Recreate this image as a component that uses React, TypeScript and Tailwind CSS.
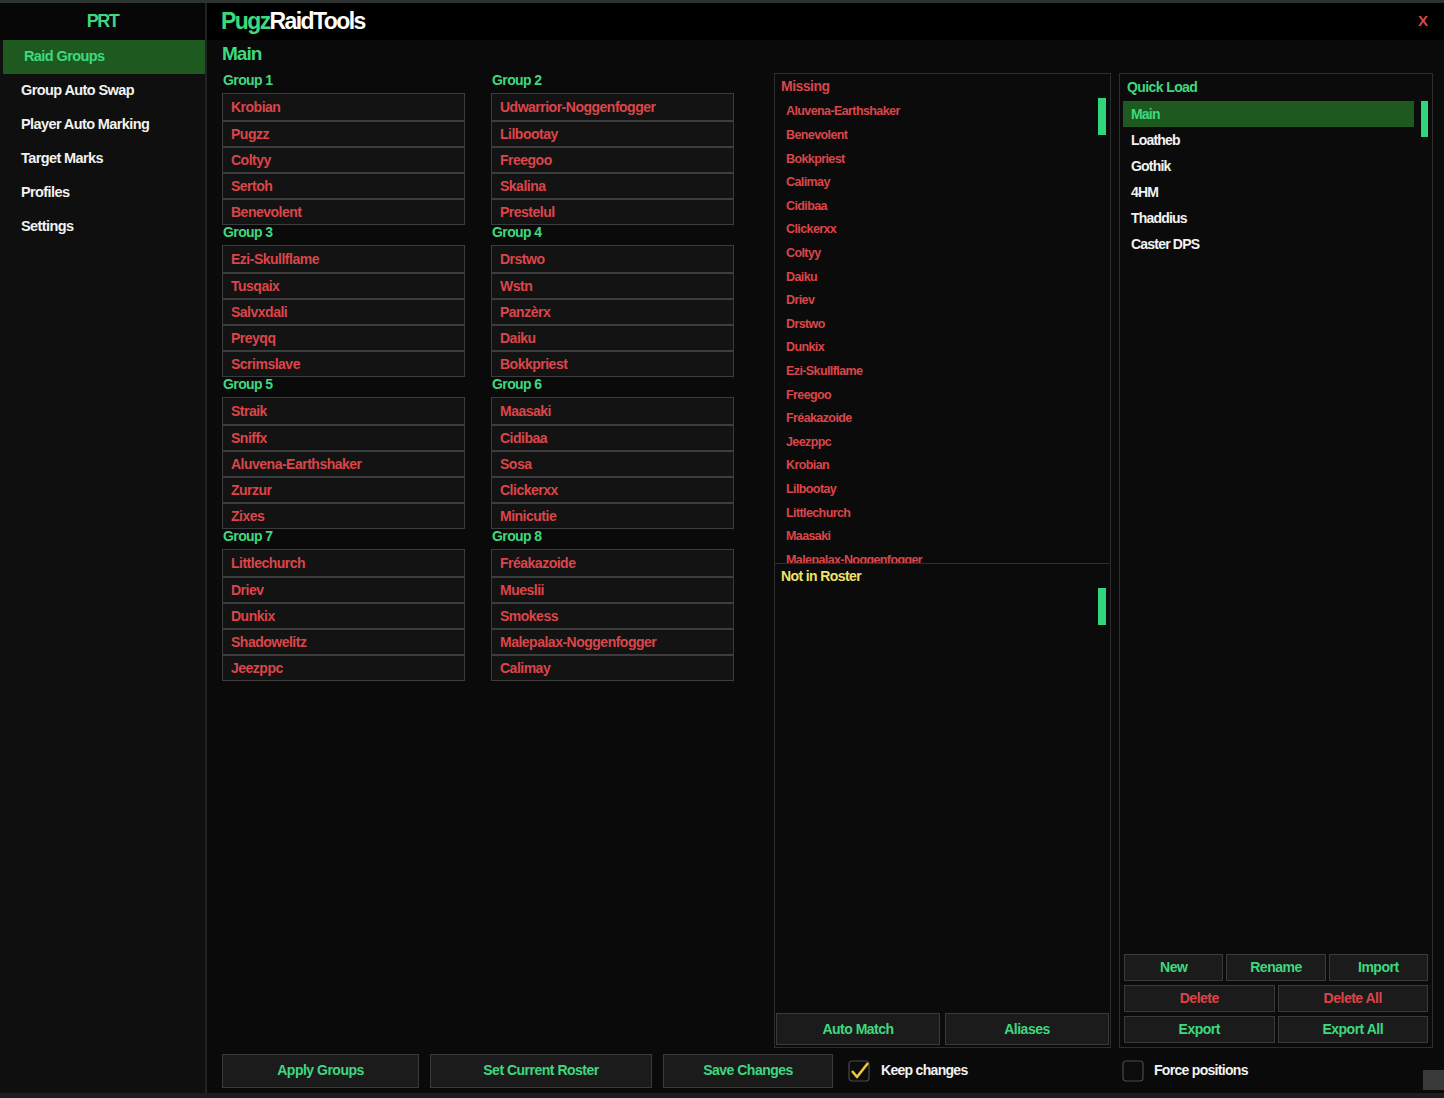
import React from "react";

const groups: { name: string; players: string[] }[] = [
  { name: "Group 1", players: ["Krobian", "Pugzz", "Coltyy", "Sertoh", "Benevolent"] },
  { name: "Group 2", players: ["Udwarrior-Noggenfogger", "Lilbootay", "Freegoo", "Skalina", "Prestelul"] },
  { name: "Group 3", players: ["Ezi-Skullflame", "Tusqaix", "Salvxdali", "Preyqq", "Scrimslave"] },
  { name: "Group 4", players: ["Drstwo", "Wstn", "Panzèrx", "Daiku", "Bokkpriest"] },
  { name: "Group 5", players: ["Straik", "Sniffx", "Aluvena-Earthshaker", "Zurzur", "Zixes"] },
  { name: "Group 6", players: ["Maasaki", "Cidibaa", "Sosa", "Clickerxx", "Minicutie"] },
  { name: "Group 7", players: ["Littlechurch", "Driev", "Dunkix", "Shadowelitz", "Jeezppc"] },
  { name: "Group 8", players: ["Fréakazoide", "Mueslii", "Smokess", "Malepalax-Noggenfogger", "Calimay"] },
];

const missing = [
  "Aluvena-Earthshaker", "Benevolent", "Bokkpriest", "Calimay", "Cidibaa", "Clickerxx", "Coltyy",
  "Daiku", "Driev", "Drstwo", "Dunkix", "Ezi-Skullflame", "Freegoo", "Fréakazoide", "Jeezppc",
  "Krobian", "Lilbootay", "Littlechurch", "Maasaki", "Malepalax-Noggenfogger",
];

const nav = ["Raid Groups", "Group Auto Swap", "Player Auto Marking", "Target Marks", "Profiles", "Settings"];
const profiles = ["Main", "Loatheb", "Gothik", "4HM", "Thaddius", "Caster DPS"];

function Btn({ label, red, className }: { label: string; red?: boolean; className?: string }) {
  return (
    <div
      className={
        "flex items-center justify-center border border-[#3a3a3a] bg-[#1b1b1b] text-[14px] font-bold tracking-[-0.5px] " +
        (red ? "text-[#dc4549] " : "text-[#3fd87f] ") +
        (className ?? "")
      }
    >
      {label}
    </div>
  );
}

function Check({ checked }: { checked?: boolean }) {
  return (
    <svg width="22" height="22" viewBox="0 0 22 22">
      <rect x="1" y="1" width="20" height="20" rx="3" fill="#0c0c0c" stroke="#4a4a4a" strokeWidth="1.2" />
      {checked ? (
        <path d="M4 11 L9 17 L20 3" fill="none" stroke="#e9c63b" strokeWidth="2.6" strokeLinejoin="round" />
      ) : null}
    </svg>
  );
}

export default function App() {
  return (
    <div className="flex h-[1098px] w-[1444px] flex-col bg-[#222226] font-['Liberation_Sans',Arial,sans-serif]">
      <div className="h-[3px] bg-[#2c3330]" />
      <div className="flex h-[1090px]">
        {/* sidebar */}
        <div className="flex w-[205px] flex-col bg-[#0f0f0f]">
          <div className="flex h-[37px] items-center justify-center bg-[#070707] text-[18px] font-bold tracking-[-1.5px] text-[#3fd87f]">
            PRT
          </div>
          {nav.map((n, i) => (
            <div
              key={n}
              className={
                "flex h-[34px] items-center pl-[21px] text-[14.5px] font-bold tracking-[-0.6px] " +
                (i === 0 ? "ml-[3px] bg-[#1e5a20] pl-[18px] text-[#3fd87f]" : "text-[#f2f2f2]")
              }
            >
              {n}
            </div>
          ))}
        </div>

        {/* main */}
        <div className="ml-[2px] flex w-[1237px] flex-col bg-[#0a0a0a]">
          <div className="flex h-[37px] items-center justify-between bg-black pl-[14px] pr-[16px]">
            <div className="text-[23px] font-bold leading-none tracking-[-1.6px]">
              <span className="text-[#3fd87f]">Pugz</span>
              <span className="text-white">RaidTools</span>
            </div>
            <div className="text-[15px] font-bold text-[#dc4549]">X</div>
          </div>

          <div className="flex flex-1 flex-col pl-[15px] pr-[11px]">
            <div className="flex h-[29px] items-center text-[19px] font-bold tracking-[-1px] text-[#3fd87f]">Main</div>

            <div className="mt-[4px] flex h-[975px]">
              {/* groups */}
              <div className="grid w-[512px] grid-cols-2 content-start gap-x-[26px]">
                {groups.map((g) => (
                  <div key={g.name} className="flex h-[152px] flex-col">
                    <div className="h-[20px] pl-[1px] text-[14px] font-bold leading-[15px] tracking-[-0.6px] text-[#3fd87f]">
                      {g.name}
                    </div>
                    <div className="flex flex-col border border-[#3c3c3c]">
                      {g.players.map((p, j) => (
                        <div
                          key={p}
                          className={
                            "flex h-[26px] items-center bg-[#131313] pl-[8px] text-[14px] font-bold tracking-[-0.5px] text-[#dc4549] " +
                            (j > 0 ? "border-t-2 border-[#3c3c3c]" : "")
                          }
                        >
                          {p}
                        </div>
                      ))}
                    </div>
                  </div>
                ))}
              </div>

              {/* missing panel */}
              <div className="ml-[40px] flex w-[337px] flex-col border border-[#2e2e2e] bg-[#0b0b0b]">
                <div className="flex h-[24px] items-center pl-[6px] text-[14px] font-bold tracking-[-0.5px] text-[#dc4549]">
                  Missing
                </div>
                <div className="flex h-[466px] border-b border-[#2e2e2e]">
                  <div className="flex-1 overflow-hidden pl-[11px] pt-[2px]">
                    {missing.map((m) => (
                      <div
                        key={m}
                        className="flex h-[23.6px] items-center text-[12.5px] font-bold tracking-[-0.6px] text-[#dc4549]"
                      >
                        {m}
                      </div>
                    ))}
                  </div>
                  <div className="mr-[4px] w-[8px]">
                    <div className="h-[37px] bg-[#2ed67c]" />
                  </div>
                </div>
                <div className="flex h-[24px] items-center pl-[6px] text-[14px] font-bold tracking-[-0.6px] text-[#eee466]">
                  Not in Roster
                </div>
                <div className="flex flex-1 justify-end">
                  <div className="mr-[4px] w-[8px]">
                    <div className="h-[37px] bg-[#2ed67c]" />
                  </div>
                </div>
                <div className="flex gap-[5px] px-[1px] pb-[2px]">
                  <Btn label="Auto Match" className="h-[32px] w-[164px]" />
                  <Btn label="Aliases" className="h-[32px] flex-1" />
                </div>
              </div>

              {/* quick load */}
              <div className="ml-[8px] flex w-[314px] flex-col border border-[#2e2e2e] bg-[#0b0b0b] px-[3px]">
                <div className="flex h-[27px] items-center pl-[4px] text-[14px] font-bold tracking-[-0.6px] text-[#3fd87f]">
                  Quick Load
                </div>
                <div className="flex flex-1">
                  <div className="flex-1">
                    {profiles.map((p, i) => (
                      <div
                        key={p}
                        className={
                          "flex h-[26px] items-center pl-[8px] text-[14px] font-bold tracking-[-0.8px] " +
                          (i === 0 ? "bg-[#1e5a20] text-[#3fd87f]" : "text-[#f2f2f2]")
                        }
                      >
                        {p}
                      </div>
                    ))}
                  </div>
                  <div className="ml-[7px] mr-[1px] w-[7px]">
                    <div className="h-[36px] bg-[#2ed67c]" />
                  </div>
                </div>
                <div className="flex flex-col gap-[4px] px-[1px] pb-[4px]">
                  <div className="flex gap-[3px]">
                    <Btn label="New" className="h-[27px] flex-1" />
                    <Btn label="Rename" className="h-[27px] flex-1" />
                    <Btn label="Import" className="h-[27px] flex-1" />
                  </div>
                  <div className="flex gap-[3px]">
                    <Btn label="Delete" red className="h-[27px] flex-1" />
                    <Btn label="Delete All" red className="h-[27px] flex-1" />
                  </div>
                  <div className="flex gap-[3px]">
                    <Btn label="Export" className="h-[27px] flex-1" />
                    <Btn label="Export All" className="h-[27px] flex-1" />
                  </div>
                </div>
              </div>
            </div>

            {/* bottom bar */}
            <div className="flex h-[45px] items-center">
              <Btn label="Apply Groups" className="h-[34px] w-[197px]" />
              <Btn label="Set Current Roster" className="ml-[11px] h-[34px] w-[222px]" />
              <Btn label="Save Changes" className="ml-[11px] h-[34px] w-[170px]" />
              <div className="ml-[15px] flex w-[274px] items-center">
                <Check checked />
                <span className="ml-[11px] text-[14px] font-bold tracking-[-0.7px] text-[#f2f2f2]">Keep changes</span>
              </div>
              <div className="flex items-center">
                <Check />
                <span className="ml-[10px] text-[14px] font-bold tracking-[-0.7px] text-[#f2f2f2]">Force positions</span>
              </div>
              <div className="ml-auto mr-[-11px] mt-[18px] h-[20px] w-[21px] bg-[#3a3a3a]" />
            </div>
          </div>
        </div>
      </div>
      <div className="h-[5px] bg-[#1c1c24]" />
    </div>
  );
}
